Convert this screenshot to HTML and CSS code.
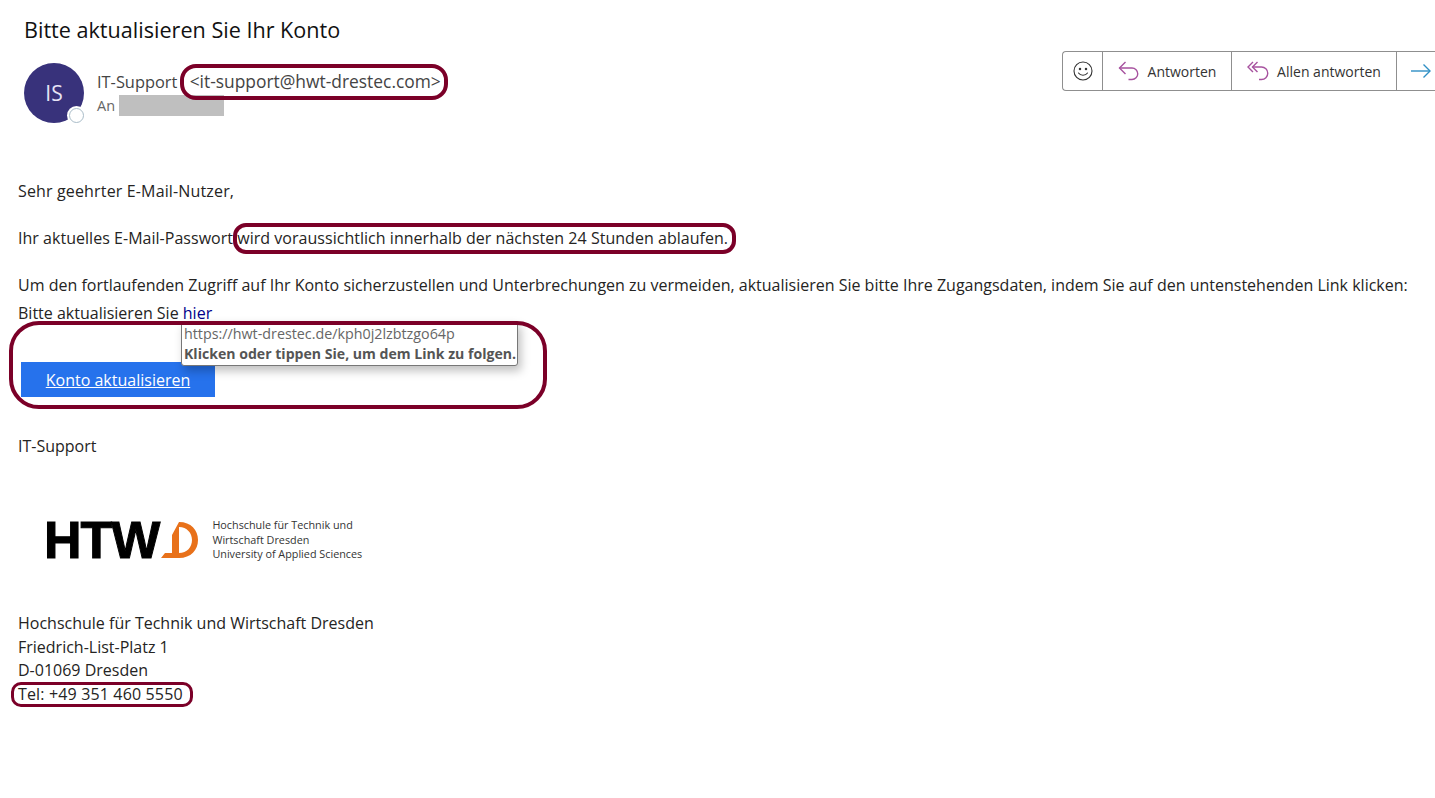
FILE: index.html
```html
<!DOCTYPE html>
<html lang="de">
<head>
    <title>Bitte aktualisieren Sie Ihr Konto</title>
    <link rel="stylesheet" href="styles.css">
</head>
<body>
    <div class="mail-head">
        <h1 class="subject">Bitte aktualisieren Sie Ihr Konto</h1>
        <div class="sender-row">
            <div class="avatar">IS<span class="presence"></span></div>
            <div class="sender">
                <div class="from">IT-Support <span class="address">&lt;it-support@hwt-drestec.com&gt;</span></div>
                <div class="to">An <span class="redacted"></span></div>
            </div>
        </div>
        <div class="actions">
            <div class="action emoji">
                <svg width="20" height="20" viewBox="0 0 20 20" fill="none" stroke="#333" stroke-width="1.1" stroke-linecap="round">
                    <circle cx="10" cy="10" r="9"/>
                    <circle cx="7" cy="8" r="0.7" fill="#333"/>
                    <circle cx="13" cy="8" r="0.7" fill="#333"/>
                    <path d="M5.5 12 C7.5 15 12.5 15 14.5 12"/>
                </svg>
            </div>
            <div class="action reply">
                <svg width="22" height="20" viewBox="0 0 22 20" fill="none" stroke="#a7529f" stroke-width="1.4">
                    <path d="M7.5 1 L1.5 7 L7.5 13"/>
                    <path d="M1.5 7 H14 A5.7 5.7 0 0 1 14 18.5 H10.5"/>
                </svg>
                <span>Antworten</span>
            </div>
            <div class="action reply-all">
                <svg width="22" height="20" viewBox="0 0 22 20" fill="none" stroke="#a7529f" stroke-width="1.4">
                    <path d="M6 1 L1 6 L6 11"/>
                    <path d="M10.5 1 L5.5 6 L10.5 11"/>
                    <path d="M5.5 6 H14.5 A6 6 0 0 1 14.5 18.5 H12"/>
                </svg>
                <span>Allen antworten</span>
            </div>
            <div class="action forward">
                <svg width="22" height="16" viewBox="0 0 22 16" fill="none" stroke="#2f8fc4" stroke-width="1.4">
                    <path d="M1 8 H20"/>
                    <path d="M13.5 1.5 L20 8 L13.5 14.5"/>
                </svg>
            </div>
        </div>
    </div>

    <div class="mail-body">
        <p class="greeting">Sehr geehrter E-Mail-Nutzer,</p>
        <p class="expiry">Ihr aktuelles E-Mail-Passwort wird voraussichtlich innerhalb der nächsten 24 Stunden ablaufen.</p>
        <p class="tight">Um den fortlaufenden Zugriff auf Ihr Konto sicherzustellen und Unterbrechungen zu vermeiden, aktualisieren Sie bitte Ihre Zugangsdaten, indem Sie auf den untenstehenden Link klicken:</p>
        <p class="tight">Bitte aktualisieren Sie <a class="link" href="#">hier</a></p>
        <a class="cta" href="#">Konto aktualisieren</a>
        <p class="signoff">IT-Support</p>
        <div class="logo">
            <span class="logo-word">HTW</span>
            <svg class="logo-mark" width="37" height="36" viewBox="0 0 37 36">
                <path fill="#e8711a" fill-rule="evenodd" d="M18 0 C30 0 37 8 37 18 C37 28 30 36 18 36 H0 L4 31 H11 V13 Z M18 5 V31 C26 31 31 25 31 18 C31 11 26 5 18 5 Z"/>
            </svg>
            <div class="logo-text">Hochschule für Technik und<br>Wirtschaft Dresden<br>University of Applied Sciences</div>
        </div>
        <div class="address-block">
            Hochschule für Technik und Wirtschaft Dresden<br>
            Friedrich-List-Platz 1<br>
            D-01069 Dresden<br>
            <span class="phone">Tel: +49 351 460 5550</span>
        </div>
    </div>

    <div class="tooltip">
        <div class="tooltip-url">https://hwt-drestec.de/kph0j2lzbtzgo64p</div>
        <div class="tooltip-hint">Klicken oder tippen Sie, um dem Link zu folgen.</div>
    </div>

    <!-- annotation rings drawn over the mail -->
    <div class="ring ring-sender"></div>
    <div class="ring ring-expiry"></div>
    <div class="ring ring-link"></div>
    <div class="ring ring-phone"></div>
</body>
</html>
```
FILE: styles.css
```css
html, body {
    height: 100%;
}
body {
    background-color: #ffffff;
    color: #252423;
    font-family: 'Open Sans', 'Noto Sans', sans-serif;
    margin: 0;
    overflow: hidden;
    position: relative;
}
.mail-head {
    display: grid;
    grid-template-columns: 1fr auto;
    align-content: start;
    padding: 18px 0 0 24px;
    height: 179px;
    box-sizing: border-box;
}
.subject {
    grid-column: 1 / 3;
    font-size: 21.6px;
    font-weight: 400;
    line-height: 24px;
    margin: 0 0 21px;
    color: #111;
}
.sender-row {
    display: flex;
    gap: 13px;
}
.avatar {
    width: 60px;
    height: 60px;
    border-radius: 50%;
    background-color: #38327b;
    color: #e6e4f5;
    font-size: 21px;
    display: flex;
    align-items: center;
    justify-content: center;
    position: relative;
}
.presence {
    position: absolute;
    right: 0;
    bottom: 0;
    width: 13px;
    height: 13px;
    background: #fff;
    border: 1px solid #a9bcc8;
    border-radius: 50%;
    box-shadow: 0 0 0 2px #fff;
}
.sender {
    padding-top: 6px;
}
.from {
    font-size: 16.4px;
    line-height: 24px;
    color: #444;
}
.address {
    font-size: 17.4px;
    margin-left: 8px;
}
.to {
    font-size: 14.5px;
    line-height: 21px;
    color: #666;
    display: flex;
    gap: 4px;
    margin-top: 1px;
}
.redacted {
    display: block;
    width: 105px;
    height: 21px;
    background-color: #bfbfbf;
}
.actions {
    display: flex;
    height: 40px;
    width: 373px;
    margin-top: -12px;
    box-sizing: border-box;
    border: 1px solid #8f8f8f;
    border-right: none;
    border-radius: 4px 0 0 4px;
}
.action {
    display: flex;
    align-items: center;
    justify-content: center;
    gap: 8px;
    font-size: 14px;
    color: #333;
    border-right: 1px solid #8f8f8f;
    box-sizing: border-box;
}
.emoji {
    width: 40px;
}
.reply {
    width: 129px;
}
.reply-all {
    width: 165px;
}
.forward {
    flex: 1;
    justify-content: flex-start;
    padding-left: 13px;
    border-right: none;
}
.mail-body {
    padding-left: 18px;
    font-size: 16px;
}
.mail-body p {
    margin: 0 0 23px;
    line-height: 24px;
}
.mail-body p.greeting {
    letter-spacing: 0.15px;
}
.mail-body p.expiry {
    letter-spacing: 0.03px;
}
.mail-body p.tight {
    margin-bottom: 4px;
}
.link {
    color: #00008b;
    text-decoration: none;
}
.cta {
    display: block;
    width: 194px;
    height: 35px;
    line-height: 37px;
    margin: 37px 0 0 3px;
    text-align: center;
    background-color: #2672ec;
    color: #fff;
}
.mail-body p.signoff {
    margin: 37px 0 0;
}
.logo {
    display: flex;
    align-items: center;
    height: 66px;
    margin: 49px 0 0 26px;
}
.logo-word {
    font-family: 'Liberation Sans', sans-serif;
    font-weight: 700;
    font-size: 52px;
    letter-spacing: -1px;
    color: #000;
    -webkit-text-stroke: 1px #000;
}
.logo-mark {
    margin-left: 2px;
}
.logo-text {
    font-size: 10.8px;
    line-height: 14.5px;
    margin-left: 14px;
    color: #333;
}
.address-block {
    margin-top: 39px;
    line-height: 23.7px;
}
.phone {
    letter-spacing: 0.15px;
}
.tooltip {
    position: absolute;
    left: 181px;
    top: 321px;
    width: 337px;
    height: 45px;
    box-sizing: border-box;
    padding: 2px 2px;
    background: #fff;
    border: 1px solid #777;
    border-radius: 3px;
    box-shadow: 3px 5px 10px rgba(0, 0, 0, 0.25);
    font-size: 14.1px;
    line-height: 20px;
    color: #666;
    white-space: nowrap;
}
.tooltip-url {
    font-size: 14.3px;
}
.tooltip-hint {
    font-weight: 700;
    color: #555;
}
.ring {
    position: absolute;
    box-sizing: border-box;
    border: 4px solid #7b0028;
    pointer-events: none;
}
.ring-sender {
    left: 180px;
    top: 64px;
    width: 268px;
    height: 36px;
    border-radius: 16px;
}
.ring-expiry {
    left: 233px;
    top: 223px;
    width: 503px;
    height: 31px;
    border-radius: 13px;
}
.ring-link {
    left: 9px;
    top: 321px;
    width: 538px;
    height: 88px;
    border-radius: 30px;
}
.ring-phone {
    left: 11px;
    top: 682px;
    width: 182px;
    height: 25px;
    border-radius: 10px;
    border-width: 3px;
}
```
